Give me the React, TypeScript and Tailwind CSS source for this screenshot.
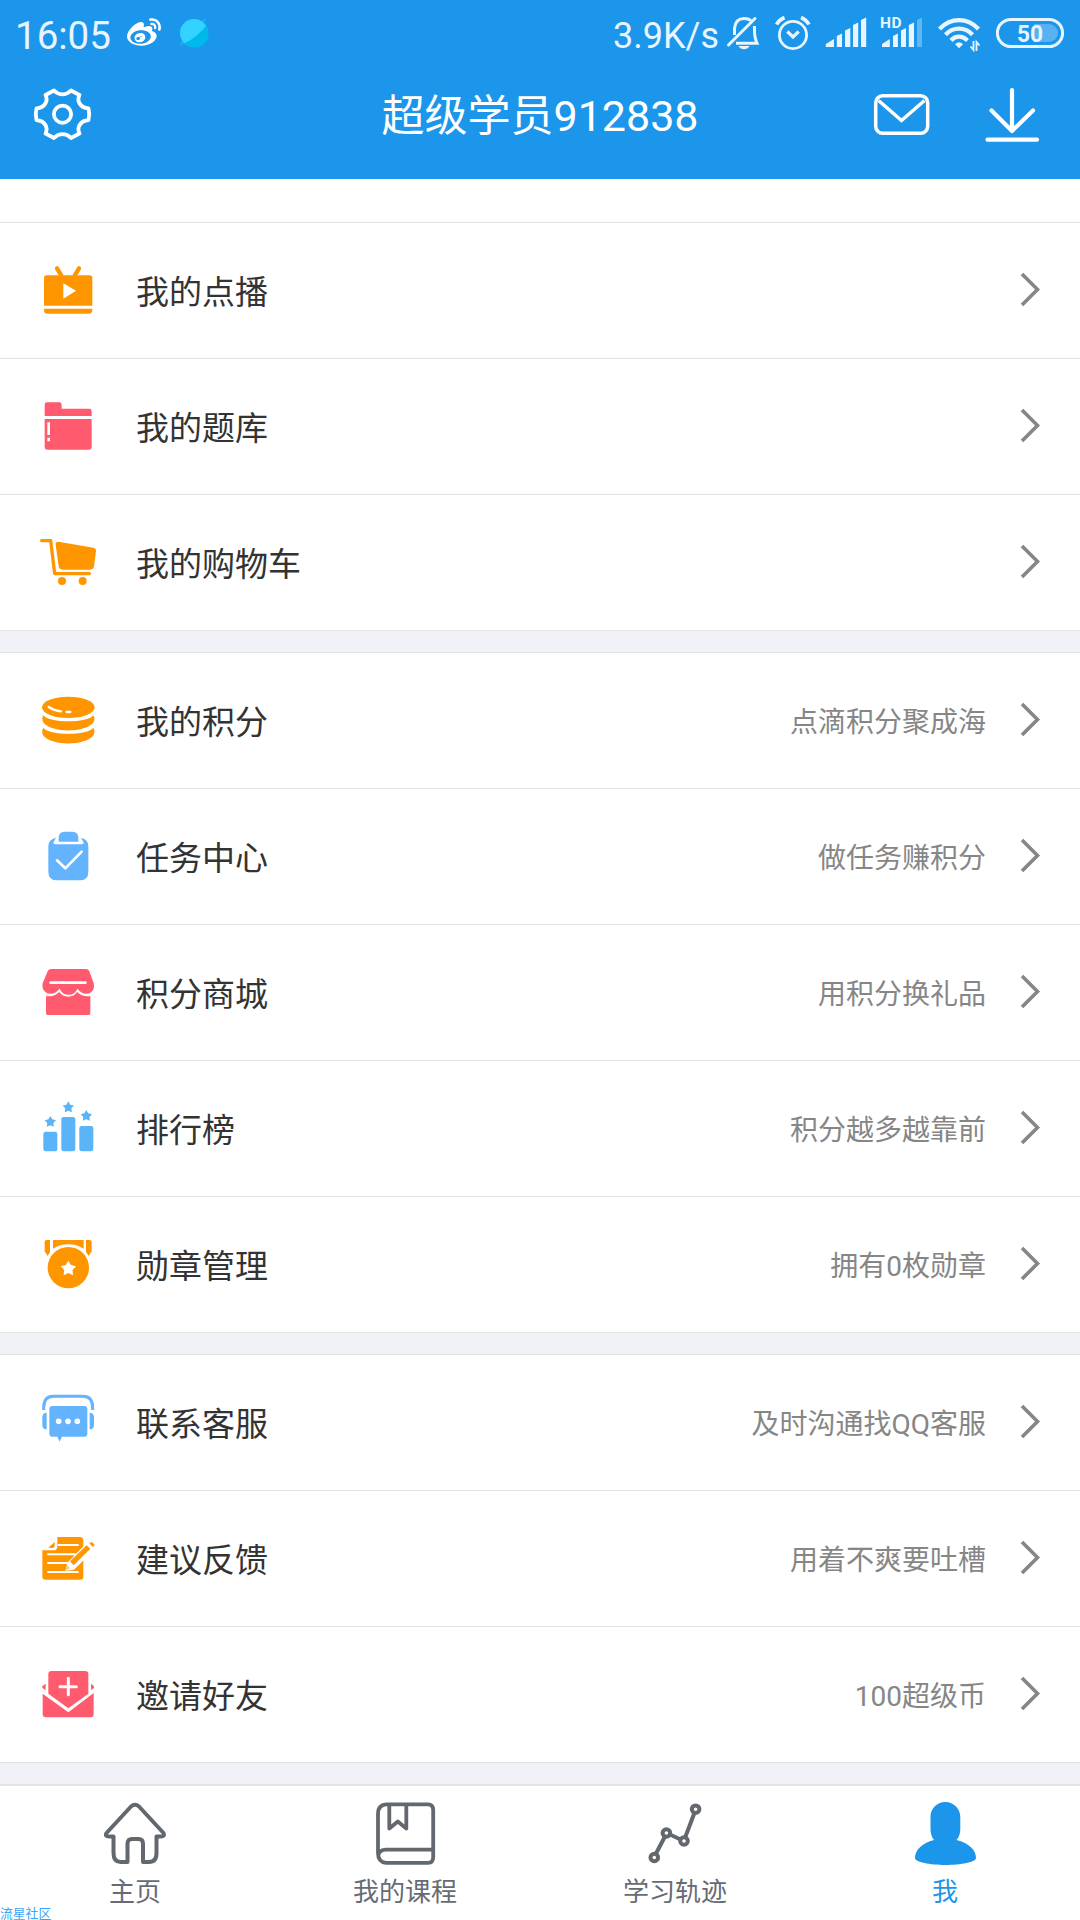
import type { ReactNode } from "react";
import { FaWeibo } from "react-icons/fa";

const ORANGE = "#ff9600";
const RED = "#ff5a6e";
const BLUE = "#64b3ff";
const SKY = "#5cb4f8";
const SLATE = "#62686e";

function starPoints(cx: number, cy: number, r: number) {
  return Array.from({ length: 10 }, (_, i) => {
    const a = (Math.PI / 5) * i - Math.PI / 2;
    const d = i % 2 ? r * 0.55 : r;
    return `${cx + d * Math.cos(a)},${cy + d * Math.sin(a)}`;
  }).join(" ");
}

function RowIcon({ top, children }: { top: number; children: ReactNode }) {
  return (
    <svg className="h-[61px] w-[60px] shrink-0" viewBox={`114 ${top} 180 183`} fill="none">
      {children}
    </svg>
  );
}

const TvIcon = (
  <RowIcon top={120}>
    <path d="M171 145L184 167M237 145L224 167" stroke={ORANGE} strokeWidth="13" strokeLinecap="round" />
    <path d="M132 257V174Q132 166 140 166H269Q277 166 277 174V257Z" fill={ORANGE} />
    <path d="M132 266H277V270Q277 281 267 281H142Q132 281 132 270Z" fill={ORANGE} />
    <path d="M190 190L228 212L190 236Z" fill="#fff" />
  </RowIcon>
);

const FolderIcon = (
  <RowIcon top={528}>
    <path d="M134 588V554Q134 547 141 547H178Q185 547 185 554V566H268Q275 566 275 573V588Z" fill={RED} />
    <path d="M134 597H275V682Q275 689 268 689H141Q134 689 134 682Z" fill={RED} />
    <path d="M142 607H150V645H142ZM142 653H150V664H142Z" fill="#fff" />
  </RowIcon>
);

const CartIcon = (
  <RowIcon top={936}>
    <path d="M125 962H152L164 1061H268" stroke={ORANGE} strokeWidth="10" strokeLinecap="round" strokeLinejoin="round" />
    <path d="M176 965L280 983Q289 985 288 994L282 1039Q280 1049 270 1049H187Q178 1049 176 1039L167 975Q166 964 176 965Z" fill={ORANGE} />
    <circle cx="186" cy="1083" r="12" fill={ORANGE} />
    <circle cx="248" cy="1083" r="12" fill={ORANGE} />
  </RowIcon>
);

const CoinsIcon = (
  <RowIcon top={150}>
    <ellipse cx="205" cy="202" rx="79" ry="32" fill={ORANGE} />
    <path d="M130 226C148 250 262 250 280 226Q286 234 281 246C258 280 152 280 129 246Q124 234 130 226Z" fill={ORANGE} />
    <path d="M130 263C148 287 262 287 280 263Q286 273 281 285C258 319 152 319 129 285Q124 273 130 263Z" fill={ORANGE} />
    <path d="M146 201Q162 212 183 214M200 216H211" stroke="#fff" strokeWidth="7" strokeLinecap="round" />
  </RowIcon>
);

const ClipboardIcon = (
  <RowIcon top={558}>
    <path d="M176 605V593Q176 575 194 575H217Q235 575 235 593V605Z" fill={BLUE} />
    <path d="M168 593L160 608Q160 613 166 613H245Q251 613 251 608L243 593Q265 598 265 618V695Q265 721 239 721H171Q145 721 145 695V618Q145 598 168 593Z" fill={BLUE} />
    <path d="M171 661L196 685L245 635" stroke="#fff" strokeWidth="8" strokeLinecap="round" strokeLinejoin="round" />
  </RowIcon>
);

const ShopIcon = (
  <RowIcon top={966}>
    <path
      d="M154 987H257Q265 987 268 994L281 1030Q286 1048 271 1058Q250 1068 232 1046Q226 1064 205 1064Q186 1064 179 1046Q161 1068 139 1058Q124 1048 128 1030L143 994Q146 987 154 987Z"
      fill={RED}
    />
    <path
      d="M138 1068Q162 1072 178 1056Q188 1070 205 1070Q222 1070 231 1056Q248 1072 271 1068V1120Q271 1125 266 1125H143Q138 1125 138 1120Z"
      fill={RED}
    />
    <path d="M152 1028H256" stroke="#fff" strokeWidth="8" strokeLinecap="round" />
  </RowIcon>
);

const RankIcon = (
  <RowIcon top={144}>
    <rect x="130" y="245" width="42" height="59" rx="7" fill={SKY} />
    <rect x="184" y="201" width="42" height="103" rx="7" fill={SKY} />
    <rect x="238" y="228" width="42" height="76" rx="7" fill={SKY} />
    <polygon points={starPoints(151, 216, 18)} fill={SKY} />
    <polygon points={starPoints(205, 172, 18)} fill={SKY} />
    <polygon points={starPoints(259, 198, 18)} fill={SKY} />
  </RowIcon>
);

const MedalIcon = (
  <RowIcon top={552}>
    <path d="M140 570H150V606L143 618L134 604V577Q134 570 140 570Z" fill={ORANGE} />
    <path d="M258 570H269Q275 570 275 577V604L266 618L258 606Z" fill={ORANGE} />
    <path d="M159 570H251V596Q230 583 205 583Q180 583 159 596Z" fill={ORANGE} />
    <circle cx="205" cy="653" r="62" fill={ORANGE} />
    <polygon points={starPoints(205, 656, 24)} fill="#fff" />
  </RowIcon>
);

const SupportIcon = (
  <RowIcon top={126}>
    <path d="M131 180V174Q131 139 160 139H249Q278 139 278 174V180" stroke={BLUE} strokeWidth="9" />
    <path d="M140 188V238Q127 238 127 224V203Q127 188 140 188ZM269 188Q282 188 282 203V224Q282 238 269 238Z" fill={BLUE} />
    <path d="M157 168H253Q262 168 262 177V251Q262 260 253 260H186L179 275L172 260H157Q148 260 148 251V177Q148 168 157 168Z" fill={BLUE} />
    <g fill="#fff">
      <circle cx="176" cy="214" r="8.500" />
      <circle cx="204" cy="214" r="8.500" />
      <circle cx="232" cy="214" r="8.500" />
    </g>
  </RowIcon>
);

const FeedbackIcon = (
  <RowIcon top={534}>
    <path d="M172 561H240Q250 561 250 572V680Q250 689 241 689H136Q127 689 127 680V601H160Q172 601 172 590Z" fill={ORANGE} />
    <path d="M145 593L164 576V586Q164 594 156 594Z" fill={ORANGE} />
    <path d="M173 585H236M142 613H230M142 639H205M142 666H236" stroke="#fff" strokeWidth="6" />
    <path d="M196 663L202 638L262 577L285 596L222 659Z" fill="#fff" />
    <path d="M210 634L260 586L271 596L221 646Z" fill={ORANGE} />
    <path d="M269 580L275 577L283 584L279 590Z" fill={ORANGE} stroke={ORANGE} strokeWidth="2" />
    <path d="M201 646L210 655L197 660Z" fill={ORANGE} opacity="0.55" />
  </RowIcon>
);

const InviteIcon = (
  <RowIcon top={942}>
    <path d="M155 963H255Q265 963 265 973V1031L205 1075L145 1031V973Q145 963 155 963Z" fill={RED} />
    <path d="M128 1031L205 1087L281 1029V1092Q281 1102 271 1102H138Q128 1102 128 1092Z" fill={RED} />
    <path d="M137 1001V1020L127 1014V1009ZM273 1001V1020L282 1014V1009Z" fill={RED} />
    <path d="M205 985V1034M180 1010H229" stroke="#fff" strokeWidth="9" strokeLinecap="round" />
  </RowIcon>
);

interface Item {
  label: string;
  hint?: string;
  icon: ReactNode;
}

const groups: Item[][] = [
  [
    { label: "我的点播", icon: TvIcon },
    { label: "我的题库", icon: FolderIcon },
    { label: "我的购物车", icon: CartIcon },
  ],
  [
    { label: "我的积分", hint: "点滴积分聚成海", icon: CoinsIcon },
    { label: "任务中心", hint: "做任务赚积分", icon: ClipboardIcon },
    { label: "积分商城", hint: "用积分换礼品", icon: ShopIcon },
    { label: "排行榜", hint: "积分越多越靠前", icon: RankIcon },
    { label: "勋章管理", hint: "拥有0枚勋章", icon: MedalIcon },
  ],
  [
    { label: "联系客服", hint: "及时沟通找QQ客服", icon: SupportIcon },
    { label: "建议反馈", hint: "用着不爽要吐槽", icon: FeedbackIcon },
    { label: "邀请好友", hint: "100超级币", icon: InviteIcon },
  ],
];

function Chevron() {
  return (
    <svg className="ml-[32px] h-[37px] w-[24px] shrink-0 -translate-y-px" viewBox="0 0 24 37" fill="none">
      <path d="M4 3L19.500 18.500L4 34" stroke="#868686" strokeWidth="3.6" />
    </svg>
  );
}

function Row({ label, hint, icon }: Item) {
  return (
    <li className="flex h-[136px] items-center border-b border-[#e2e3e5] pr-[38px] pl-[38px]">
      {icon}
      <span className="ml-[38px] pt-[4px] text-[33px] leading-[48px] text-[#333]">{label}</span>
      <span className="ml-auto pt-[4px] text-[28px] leading-[40px] text-[#868686]">{hint}</span>
      <Chevron />
    </li>
  );
}

function StatusBar() {
  return (
    <div className="flex h-[66px] items-center pr-[14px] pl-[15px] text-[#e8f4fe]">
      <span className="w-[100px] pt-[5px] text-[38.5px] leading-[46px]">16:05</span>
      <FaWeibo className="ml-[12px] size-[34px] text-white" />
      <svg className="ml-[17px] size-[32px]" viewBox="178 17 32 32">
        <path d="M207.5 18L181 46L180 45.500Q181 42 184 39L203 20Z" fill="#14b9ee" />
        <circle cx="194" cy="33" r="14" fill="#33d3ff" />
        <path d="M206 25.500A14 14 0 0 1 184.500 43.300Q190 41 196 36Q203 30 206 25.500Z" fill="#00b9ec" />
      </svg>
      <span className="ml-auto pt-[5px] text-[36px] leading-[46px]">3.9K/s</span>
      <svg className="ml-[5px] h-[38px] w-[40px]" viewBox="724 14 40 38" fill="none" stroke="currentColor" strokeWidth="3">
        <path d="M734.500 35V28.500Q735.500 18.500 744 18.500Q748.500 18.500 751 20.500M754.500 26V33Q755 39 757 43.300H736" />
        <path d="M728.500 45L755 18.500" strokeLinecap="round" />
        <path d="M738.500 46H749.500Q747.500 49.200 744 49.200Q740.500 49.200 738.500 46Z" fill="currentColor" stroke="none" />
      </svg>
      <svg className="ml-[8px] h-[38px] w-[42px]" viewBox="772 14 42 38" fill="none" stroke="currentColor" strokeWidth="2.800">
        <circle cx="793" cy="35" r="13.600" />
        <path d="M787.300 31.500L793 37L798.700 31.500" strokeWidth="3.200" />
        <path d="M776.500 24.500Q779 20 784.500 17.500M801 17.500Q806.500 20 809 24.500" strokeWidth="3.600" />
      </svg>
      <svg className="ml-[10px] h-[38px] w-[44px]" viewBox="824 14 44 38" fill="currentColor">
        <path d="M825.800 47V44L834 39V47ZM836.800 47V36L842 33.500V47ZM845 47V30.500L850.300 28V47ZM853 47V25L858.200 22.500V47ZM861 47V20L866.200 17.500V47Z" />
      </svg>
      <svg className="ml-[10px] h-[38px] w-[46px]" viewBox="878 14 46 38" fill="currentColor">
        <path d="M882 47V44L889.800 39V47ZM893 47V36L897.900 33.500V47ZM901 47V30.500L906 28V47ZM908.800 47V25L914 22.500V47Z" />
        <path d="M917 47V20L922 17.500V47Z" opacity="0.350" />
        <text x="880" y="28" fontSize="15.500" fontWeight="700" letterSpacing="0.600">HD</text>
      </svg>
      <svg className="ml-[12px] h-[38px] w-[48px]" viewBox="936 14 48 38" fill="none" stroke="currentColor" strokeWidth="4.300">
        <path d="M939.500 29Q948 20.200 959 20.200Q970 20.200 978.500 29M945.500 34.800Q951 28.700 959 28.700Q967 28.700 972.500 34.800M951 40.500Q954.500 36.700 959 36.700Q963.500 36.700 967.500 40.500" />
        <path d="M959 48.300L955 44.300Q959 40 963 44.300Z" fill="currentColor" stroke="none" />
        <path d="M973.500 41V50L970.500 46.500M976.500 51V42L979.500 45.500" strokeWidth="1.800" />
      </svg>
      <svg className="ml-[10px] h-[38px] w-[72px]" viewBox="994 14 72 38">
        <rect x="997.400" y="19.400" width="65.200" height="27.200" rx="13.600" fill="none" stroke="currentColor" strokeWidth="3" />
        <path d="M1034 24H1049A9 9 0 0 1 1049 42H1034Z" fill="currentColor" opacity="0.300" />
        <text x="1017" y="41.800" textLength="26" lengthAdjust="spacingAndGlyphs" fontSize="24.500" fontWeight="700" fill="currentColor">50</text>
      </svg>
    </div>
  );
}

function TitleBar() {
  return (
    <div className="flex h-[113px] items-center justify-between px-[32px] text-white">
      <div className="flex w-[180px]">
        <svg className="h-[57px] w-[60px] -translate-y-[8px]" viewBox="32 86 60 57" fill="none" stroke="currentColor" strokeWidth="3.800" strokeLinejoin="round">
          <path d="M71 90.500L79.500 95C76.500 101 80 107.500 88.500 108.500Q90 114 88.500 120C80 121 76.500 127.500 79.500 133.500L71 138C66 132.800 59 132.800 54 138L45.500 133.500C48.500 127.500 45 121 36.500 120Q35 114 36.500 108.500C45 107.500 48.500 101 45.500 95L54 90.500C59 95.700 66 95.700 71 90.500Z" />
          <circle cx="62.500" cy="114.200" r="8.600" />
        </svg>
      </div>
      <h1 className="-translate-y-[7px] text-[43px] leading-[60px] font-normal">超级学员912838</h1>
      <div className="flex w-[180px] -translate-y-[8px] items-center justify-end pr-[6px]">
        <svg className="h-[57px] w-[60px] shrink-0" viewBox="872 86 60 57" fill="none" stroke="currentColor" strokeWidth="3.500">
          <rect x="875.700" y="95.700" width="52" height="37.600" rx="7" />
          <path d="M878.500 100.500L901.500 120.500L924.500 100.500" />
        </svg>
        <svg className="ml-[50px] h-[57px] w-[60px] shrink-0" viewBox="982 86 60 57" fill="none" stroke="currentColor" strokeWidth="4.200" strokeLinecap="round" strokeLinejoin="round">
          <path d="M1012 90V131M991.500 110.500L1012 131L1033 110.500M987.500 139.700H1037" />
        </svg>
      </div>
    </div>
  );
}

const tabs = [
  {
    label: "主页",
    icon: (
      <svg className="h-[66px] w-[66px]" viewBox="102 1801 66 66" fill="none" stroke={SLATE} strokeWidth="4" strokeLinejoin="round">
        <path d="M131 1806.500Q135 1803 139 1806.500L163.500 1833Q165 1836.500 161 1836.500H156.500V1853Q156.500 1862 149 1862H143V1844Q143 1839 138.500 1839H132Q127.500 1839 127.500 1844V1862H120.500Q113.500 1862 113.500 1853V1836.500H109Q104.500 1836.500 106.500 1833Z" />
      </svg>
    ),
  },
  {
    label: "我的课程",
    icon: (
      <svg className="h-[66px] w-[66px]" viewBox="372 1801 66 66" fill="none" stroke={SLATE} strokeWidth="3.800" strokeLinejoin="round">
        <path d="M378 1814Q378 1804.300 387 1804.300H428Q433.200 1804.300 433.200 1810V1857Q433.200 1862.800 428 1862.800H386Q378 1862 378 1853ZM378.500 1855Q379.500 1849.700 386 1849.700H433M389.300 1804.500V1828.500L397.800 1821.500L406.300 1828.500V1804.500" />
      </svg>
    ),
  },
  {
    label: "学习轨迹",
    icon: (
      <svg className="h-[66px] w-[66px]" viewBox="642 1801 66 66" fill="none" stroke={SLATE} strokeWidth="4">
        <path d="M656 1853.500L664.700 1837M670.500 1834.800L680 1839.200M685.500 1836.500L694.200 1813.500" />
        <circle cx="654.300" cy="1857.500" r="3.800" />
        <circle cx="666.400" cy="1833" r="3.800" />
        <circle cx="684" cy="1841" r="3.800" />
        <circle cx="695.600" cy="1809.200" r="3.800" />
      </svg>
    ),
  },
  {
    label: "我",
    active: true,
    icon: (
      <svg className="h-[66px] w-[66px]" viewBox="912 1801 66 66" fill="#1b96eb">
        <path d="M945.300 1802C954 1802 960.300 1809 960.300 1817V1829Q960.300 1836 956.500 1840C969 1843 976 1850 976 1858C976 1862 961 1865 945.300 1865C930 1865 915 1862 915 1858C915 1850 922 1843 934 1840Q930.500 1836 930.500 1829V1817C930.500 1809 936.500 1802 945.300 1802Z" />
      </svg>
    ),
  },
];

export default function App() {
  return (
    <div className="relative flex h-[1920px] w-[1080px] flex-col overflow-hidden bg-[#f0f2f7] font-['Roboto','Noto_Sans_CJK_SC',sans-serif]">
      <header className="h-[179px] shrink-0 bg-[#1b96eb]">
        <StatusBar />
        <TitleBar />
      </header>
      <main className="flex flex-col gap-[21px]">
        {groups.map((items, i) => (
          <ul key={items[0].label} className={i === 0 ? "bg-white pt-[43px]" : "border-t border-[#e2e3e5] bg-white"}>
            {i === 0 && <li className="border-t border-[#e2e3e5]" />}
            {items.map((item) => (
              <Row key={item.label} {...item} />
            ))}
          </ul>
        ))}
      </main>
      <nav className="mt-auto grid h-[136px] shrink-0 grid-cols-4 border-t-2 border-[#e2e3e5] bg-white">
        {tabs.map((tab) => (
          <div key={tab.label} className="flex flex-col items-center pt-[15px]">
            {tab.icon}
            <span className={tab.active ? "mt-[6px] text-[26px] leading-[38px] text-[#1b96eb]" : "mt-[6px] text-[26px] leading-[38px] text-[#666b75]"}>
              {tab.label}
            </span>
          </div>
        ))}
      </nav>
      <span className="absolute bottom-0 left-0 text-[12.8px] leading-[13px] whitespace-nowrap text-[#3aa5f8]">流星社区</span>
    </div>
  );
}
